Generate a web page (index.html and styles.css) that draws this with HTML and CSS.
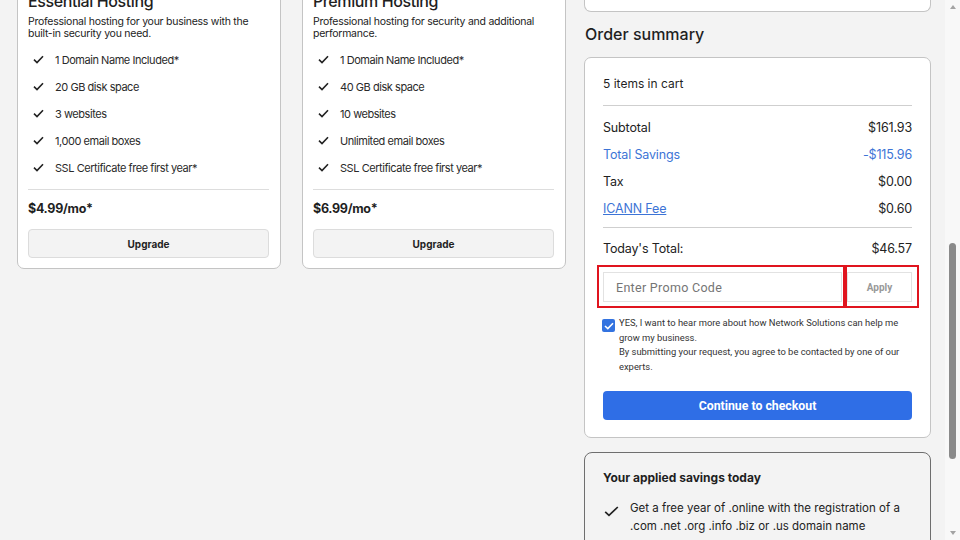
FILE: index.html
```html
<!DOCTYPE html>
<html lang="en">
<head>
    <meta charset="utf-8">
    <link rel="stylesheet" href="styles.css">
</head>
<body>
    <div class="page">
        <div class="plans">
            <div class="plan">
                <h2 class="plan-title">Essential Hosting</h2>
                <p class="plan-desc">Professional hosting for your business with the built-in security you need.</p>
                <ul class="features">
                    <li><span class="tick"><svg width="11" height="9" viewBox="0 0 11 9"><path d="M1 4.6 L4 7.5 L10 1.2" fill="none" stroke="#222" stroke-width="1.6"/></svg></span>1 Domain Name Included*</li>
                    <li><span class="tick"><svg width="11" height="9" viewBox="0 0 11 9"><path d="M1 4.6 L4 7.5 L10 1.2" fill="none" stroke="#222" stroke-width="1.6"/></svg></span>20 GB disk space</li>
                    <li><span class="tick"><svg width="11" height="9" viewBox="0 0 11 9"><path d="M1 4.6 L4 7.5 L10 1.2" fill="none" stroke="#222" stroke-width="1.6"/></svg></span>3 websites</li>
                    <li><span class="tick"><svg width="11" height="9" viewBox="0 0 11 9"><path d="M1 4.6 L4 7.5 L10 1.2" fill="none" stroke="#222" stroke-width="1.6"/></svg></span>1,000 email boxes</li>
                    <li><span class="tick"><svg width="11" height="9" viewBox="0 0 11 9"><path d="M1 4.6 L4 7.5 L10 1.2" fill="none" stroke="#222" stroke-width="1.6"/></svg></span>SSL Certificate free first year*</li>
                </ul>
                <div class="price">$4.99/mo*</div>
                <button class="upgrade">Upgrade</button>
            </div>
            <div class="plan">
                <h2 class="plan-title">Premium Hosting</h2>
                <p class="plan-desc">Professional hosting for security and additional performance.</p>
                <ul class="features">
                    <li><span class="tick"><svg width="11" height="9" viewBox="0 0 11 9"><path d="M1 4.6 L4 7.5 L10 1.2" fill="none" stroke="#222" stroke-width="1.6"/></svg></span>1 Domain Name Included*</li>
                    <li><span class="tick"><svg width="11" height="9" viewBox="0 0 11 9"><path d="M1 4.6 L4 7.5 L10 1.2" fill="none" stroke="#222" stroke-width="1.6"/></svg></span>40 GB disk space</li>
                    <li><span class="tick"><svg width="11" height="9" viewBox="0 0 11 9"><path d="M1 4.6 L4 7.5 L10 1.2" fill="none" stroke="#222" stroke-width="1.6"/></svg></span>10 websites</li>
                    <li><span class="tick"><svg width="11" height="9" viewBox="0 0 11 9"><path d="M1 4.6 L4 7.5 L10 1.2" fill="none" stroke="#222" stroke-width="1.6"/></svg></span>Unlimited email boxes</li>
                    <li><span class="tick"><svg width="11" height="9" viewBox="0 0 11 9"><path d="M1 4.6 L4 7.5 L10 1.2" fill="none" stroke="#222" stroke-width="1.6"/></svg></span>SSL Certificate free first year*</li>
                </ul>
                <div class="price">$6.99/mo*</div>
                <button class="upgrade">Upgrade</button>
            </div>
        </div>

        <div class="side">
            <div class="prev-card"></div>
            <h3 class="side-title">Order summary</h3>
            <div class="summary">
                <div class="cart-count">5 items in cart</div>
                <div class="rows">
                    <div class="row"><span>Subtotal</span><span>$161.93</span></div>
                    <div class="row savings"><span>Total Savings</span><span>-$115.96</span></div>
                    <div class="row"><span>Tax</span><span>$0.00</span></div>
                    <div class="row"><a href="#" class="fee">ICANN Fee</a><span>$0.60</span></div>
                </div>
                <div class="row total"><span>Today's Total:</span><span>$46.57</span></div>
                <div class="promo">
                    <div class="promo-box"><input type="text" class="promo-input" placeholder="Enter Promo Code"></div>
                    <div class="apply-box"><button class="apply">Apply</button></div>
                </div>
                <label class="optin">
                    <span class="checkbox"><svg width="10" height="8" viewBox="0 0 10 8"><path d="M1 4 L3.8 6.6 L9 1.2" fill="none" stroke="#fff" stroke-width="1.6"/></svg></span>
                    <span class="optin-text">YES, I want to hear more about how Network Solutions can help me grow my business.<br>By submitting your request, you agree to be contacted by one of our experts.</span>
                </label>
                <button class="checkout">Continue to checkout</button>
            </div>
            <div class="applied">
                <div class="applied-title">Your applied savings today</div>
                <div class="applied-item">
                    <span class="applied-tick"><svg width="15" height="11" viewBox="0 0 15 11"><path d="M1.2 5.8 L5 9.4 L13.8 1" fill="none" stroke="#222" stroke-width="1.7"/></svg></span>
                    <span>Get a free year of .online with the registration of a .com .net .org .info .biz or .us domain name</span>
                </div>
            </div>
        </div>
    </div>

    <div class="scrollbar">
        <span class="arrow-up"></span>
        <div class="track"><div class="thumb"></div></div>
        <span class="arrow-down"></span>
    </div>
</body>
</html>
```

FILE: styles.css
```css
body {
    margin: 0;
    height: 540px;
    overflow: hidden;
    display: flex;
    background-color: #f3f3f3;
    font-family: Inter, "Liberation Sans", sans-serif;
    color: #1f1f1f;
}
.page {
    flex: 1;
    display: flex;
    align-items: flex-start;
    gap: 18px;
    padding-left: 17px;
    margin-top: -20px;
}
.plans {
    display: flex;
    gap: 21px;
}
.plan {
    width: 241px;
    padding: 10px 11px 10px 10px;
    background-color: #fff;
    border: 1px solid #c4c4c4;
    border-radius: 7px;
}
.plan-title {
    margin: 0;
    font-size: 16px;
    line-height: 20px;
    font-weight: 500;
    letter-spacing: -0.4px;
}
.plan-desc {
    margin: 5px 0 0;
    font-size: 10.5px;
    line-height: 12px;
    letter-spacing: -0.25px;
    color: #222;
}
.features {
    list-style: none;
    margin: 6px 0 0;
    padding: 0;
    border-bottom: 1px solid #ddd;
    padding-bottom: 8px;
}
.features li {
    display: flex;
    align-items: center;
    height: 27px;
    font-size: 11px;
    letter-spacing: -0.45px;
    color: #2a2a2a;
}
.tick {
    display: flex;
    width: 27px;
    padding-left: 5px;
    box-sizing: border-box;
}
.price {
    margin-top: 11px;
    font-size: 12.5px;
    line-height: 16px;
    font-weight: 700;
    letter-spacing: -0.3px;
}
.upgrade {
    display: block;
    width: 100%;
    height: 29px;
    margin-top: 12px;
    background-color: #f3f3f3;
    border: 1px solid #dcdcdc;
    border-radius: 4px;
    font-family: Inter, "Liberation Sans", sans-serif;
    font-size: 10px;
    font-weight: 700;
    color: #1f1f1f;
}
.side {
    width: 347px;
}
.prev-card {
    height: 31px;
    background-color: #fff;
    border: 1px solid #c4c4c4;
    border-top: none;
    border-radius: 0 0 7px 7px;
}
.side-title {
    margin: 12px 0 0 1px;
    font-size: 16px;
    line-height: 20px;
    font-weight: 500;
}
.summary {
    margin-top: 13px;
    padding: 18px 18px 17px 18px;
    background-color: #fff;
    border: 1px solid #c4c4c4;
    border-radius: 7px;
}
.cart-count {
    font-size: 12px;
    line-height: 16px;
    padding-bottom: 13px;
    border-bottom: 1px solid #cfcfcf;
}
.rows {
    padding: 8px 0 5px;
    border-bottom: 1px solid #cfcfcf;
}
.row {
    display: flex;
    justify-content: space-between;
    align-items: center;
    height: 27px;
    font-size: 12.5px;
    letter-spacing: -0.15px;
    color: #222;
}
.savings {
    color: #3d74d6;
}
.fee {
    color: #3d74d6;
}
.total {
    margin-top: 7px;
}
.promo {
    display: flex;
    margin: 3px 0 0 -6px;
}
.promo-box {
    flex: none;
    width: 239px;
    padding: 5px 1px 4px 4px;
    border: 2px solid #e0141e;
}
.promo-input {
    display: block;
    box-sizing: border-box;
    width: 100%;
    height: 30px;
    padding: 0 12px;
    border: 1px solid #e2e2e2;
    font-family: Roboto, "Liberation Sans", sans-serif;
    font-size: 12.5px;
    letter-spacing: 0.3px;
}
.promo-input::placeholder {
    color: #757575;
}
.apply-box {
    flex: none;
    width: 65px;
    padding: 5px 5px 4px 0;
    border: 2px solid #e0141e;
}
.apply {
    display: block;
    width: 100%;
    height: 30px;
    background-color: #fff;
    border: 1px solid #e2e2e2;
    font-family: Roboto, "Liberation Sans", sans-serif;
    font-size: 10px;
    font-weight: 700;
    color: #999;
}
.optin {
    display: flex;
    gap: 4px;
    margin: 8px 0 0 -1px;
    font-family: Roboto, "Liberation Sans", sans-serif;
    font-size: 9.4px;
    line-height: 14.5px;
    color: #333;
}
.checkbox {
    flex: none;
    display: flex;
    align-items: center;
    justify-content: center;
    width: 13px;
    height: 13px;
    margin-top: 3px;
    background-color: #3373e0;
    border-radius: 2px;
}
.checkout {
    display: block;
    width: 100%;
    height: 29px;
    margin-top: 17px;
    background-color: #2f6ee6;
    border: none;
    border-radius: 4px;
    color: #fff;
    font-family: Roboto, "Liberation Sans", sans-serif;
    font-size: 12.3px;
    font-weight: 700;
}
.applied {
    margin-top: 14px;
    height: 120px;
    padding: 17px 18px;
    background-color: #f3f3f3;
    border: 1px solid #6e6e6e;
    border-radius: 8px;
}
.applied-title {
    font-size: 12px;
    line-height: 16px;
    font-weight: 700;
}
.applied-item {
    display: flex;
    gap: 11px;
    margin-top: 13px;
    font-size: 11.5px;
    line-height: 18px;
    color: #222;
}
.applied-tick {
    flex: none;
    padding-top: 5px;
    padding-left: 1px;
}
.scrollbar {
    width: 15px;
    display: flex;
    flex-direction: column;
    align-items: center;
    background-color: #f8f8f8;
}
.arrow-up, .arrow-down {
    width: 0;
    height: 0;
    margin: 5px 0;
    border-left: 3.5px solid transparent;
    border-right: 3.5px solid transparent;
}
.arrow-up {
    border-bottom: 4px solid #a3a3a3;
}
.arrow-down {
    border-top: 4px solid #a3a3a3;
}
.track {
    flex: 1;
    width: 100%;
    display: flex;
    justify-content: center;
    padding-top: 229px;
}
.thumb {
    width: 7px;
    height: 216px;
    background-color: #8a8a8a;
    border-radius: 4px;
}
```
